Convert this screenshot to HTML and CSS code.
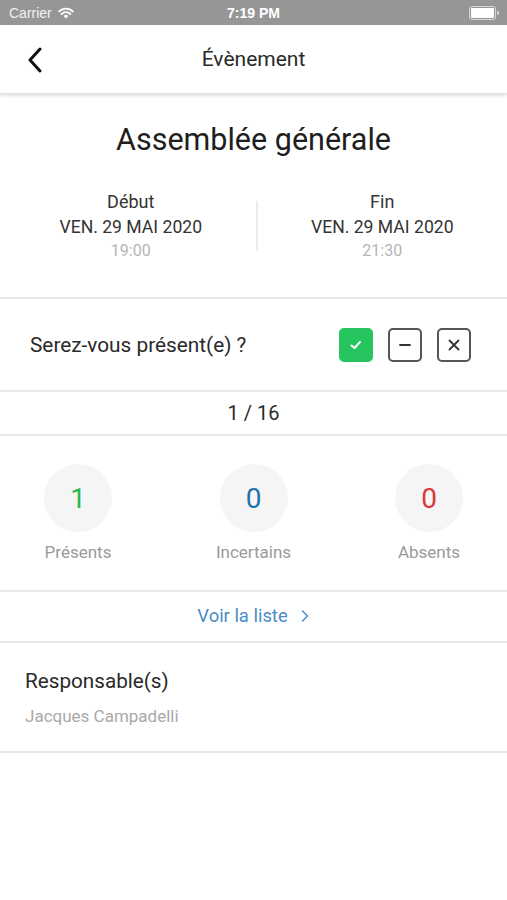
FILE: index.html
```html
<!DOCTYPE html>
<html lang="fr">
<head>
  <meta charset="UTF-8" />
  <meta name="viewport" content="width=device-width, initial-scale=1.0" />
  <title>Évènement</title>
  <link rel="stylesheet" href="styles.css">
</head>
<body>
  <div class="status-bar">
    <div class="status-left">
      <span>Carrier</span>
      <svg class="wifi" width="16" height="12" viewBox="0 0 16 12">
        <path d="M8 11.5 L5.6 9 A3.4 3.4 0 0 1 10.4 9 Z" fill="#fff"/>
        <path d="M3.6 7 A6.2 6.2 0 0 1 12.4 7" stroke="#fff" stroke-width="1.9" fill="none" stroke-linecap="round"/>
        <path d="M1.2 4.4 A9.6 9.6 0 0 1 14.8 4.4" stroke="#fff" stroke-width="1.9" fill="none" stroke-linecap="round"/>
      </svg>
    </div>
    <div class="status-time">7:19 PM</div>
    <div class="status-right">
      <div class="battery"><div class="battery-fill"></div></div>
      <div class="battery-tip"></div>
    </div>
  </div>

  <header class="nav">
    <svg class="back" width="16" height="26" viewBox="0 0 16 26">
      <path d="M13 2 L3 13 L13 24" stroke="#111" stroke-width="3" fill="none" stroke-linecap="round" stroke-linejoin="round"/>
    </svg>
    <div class="nav-title">Évènement</div>
  </header>

  <section class="event">
    <h1>Assemblée générale</h1>
    <div class="dates">
      <div class="date-col">
        <div class="date-label">Début</div>
        <div class="date-day">VEN. 29 MAI 2020</div>
        <div class="date-time">19:00</div>
      </div>
      <div class="date-sep"></div>
      <div class="date-col">
        <div class="date-label">Fin</div>
        <div class="date-day">VEN. 29 MAI 2020</div>
        <div class="date-time">21:30</div>
      </div>
    </div>
  </section>

  <section class="presence">
    <div class="presence-question">Serez-vous présent(e) ?</div>
    <div class="presence-buttons">
      <div class="pbtn pbtn-yes">
        <svg width="14" height="12" viewBox="0 0 14 12"><path d="M2.5 6.5 L5.5 9 L11 3" stroke="#fff" stroke-width="2" fill="none" stroke-linecap="round" stroke-linejoin="round"/></svg>
      </div>
      <div class="pbtn">
        <svg width="16" height="16" viewBox="0 0 16 16"><path d="M3 8 H13" stroke="#333" stroke-width="1.8" stroke-linecap="round"/></svg>
      </div>
      <div class="pbtn">
        <svg width="16" height="16" viewBox="0 0 16 16"><path d="M3.5 3.5 L12.5 12.5 M12.5 3.5 L3.5 12.5" stroke="#333" stroke-width="1.8" stroke-linecap="round"/></svg>
      </div>
    </div>
  </section>

  <div class="count">1 / 16</div>

  <section class="stats">
    <div class="stat">
      <div class="stat-circle green">1</div>
      <div class="stat-label">Présents</div>
    </div>
    <div class="stat">
      <div class="stat-circle blue">0</div>
      <div class="stat-label">Incertains</div>
    </div>
    <div class="stat">
      <div class="stat-circle red">0</div>
      <div class="stat-label">Absents</div>
    </div>
  </section>

  <div class="see-list">
    <span>Voir la liste</span>
    <svg width="10" height="14" viewBox="0 0 10 14"><path d="M2.5 2 L7.5 7 L2.5 12" stroke="#4a8cc4" stroke-width="1.5" fill="none" stroke-linecap="round" stroke-linejoin="round"/></svg>
  </div>

  <section class="managers">
    <div class="managers-title">Responsable(s)</div>
    <div class="managers-name">Jacques Campadelli</div>
  </section>
</body>
</html>
```

FILE: styles.css
```css
body {
  margin: 0;
  font-family: Roboto, "Noto Sans", sans-serif;
  background: #fff;
  color: #222;
  width: 507px;
}
.status-bar {
  height: 25px;
  background: #969696;
  color: #fff;
  display: flex;
  align-items: center;
  justify-content: space-between;
  padding: 0 8px 0 9px;
  font-family: "Liberation Sans", sans-serif;
  font-size: 14px;
  position: relative;
}
.status-left {
  display: flex;
  align-items: center;
  gap: 6px;
  color: #f2f2f2;
}
.status-time {
  position: absolute;
  left: 0;
  right: 0;
  text-align: center;
  font-weight: bold;
  font-size: 14px;
}
.status-right {
  display: flex;
  align-items: center;
}
.battery {
  width: 23px;
  height: 10px;
  border: 1px solid #d8d8d8;
  border-radius: 3px;
  padding: 1px;
}
.battery-fill {
  width: 100%;
  height: 100%;
  background: #fff;
  border-radius: 1px;
}
.battery-tip {
  width: 2px;
  height: 4px;
  background: #d0d0d0;
  margin-left: 1px;
  border-radius: 0 1px 1px 0;
}
.nav {
  height: 69px;
  display: flex;
  align-items: center;
  justify-content: center;
  position: relative;
  box-shadow: 0 2px 3px rgba(0, 0, 0, 0.12);
  border-bottom: 1px solid #e2e2e2;
  box-sizing: border-box;
}
.back {
  position: absolute;
  left: 27px;
  top: 22px;
}
.nav-title {
  font-size: 21px;
  color: #2a2a2a;
}
.event {
  padding-top: 28px;
  height: 175px;
  border-bottom: 2px solid #e8e8e8;
  box-sizing: content-box;
}
.event h1 {
  margin: 0;
  text-align: center;
  font-weight: normal;
  font-size: 30.5px;
  line-height: 36px;
  color: #1e1e1e;
}
.dates {
  display: flex;
  align-items: center;
  margin-top: 32px;
  padding-left: 6px;
}
.date-col {
  flex: 1;
  text-align: center;
}
.date-sep {
  width: 2px;
  height: 50px;
  background: #ececec;
}
.date-label {
  font-size: 18px;
  line-height: 24px;
  color: #333;
}
.date-day {
  font-size: 17.6px;
  line-height: 26px;
  color: #333;
}
.date-time {
  font-size: 16px;
  line-height: 21px;
  color: #b5b5b5;
}
.presence {
  height: 91px;
  display: flex;
  align-items: center;
  justify-content: space-between;
  padding: 0 36px 0 30px;
  border-bottom: 2px solid #e8e8e8;
}
.presence-question {
  font-size: 20.8px;
  color: #2a2a2a;
}
.presence-buttons {
  display: flex;
  gap: 15px;
}
.pbtn {
  width: 34px;
  height: 34px;
  box-sizing: border-box;
  border: 2px solid #555;
  border-radius: 5px;
  display: flex;
  align-items: center;
  justify-content: center;
}
.pbtn-yes {
  background: #26c45e;
  border-color: #26c45e;
}
.count {
  height: 42px;
  display: flex;
  align-items: center;
  justify-content: center;
  font-size: 20px;
  color: #2a2a2a;
  border-bottom: 2px solid #e8e8e8;
}
.stats {
  display: flex;
  justify-content: space-between;
  padding: 28px 44px 0;
  height: 126px;
  box-sizing: content-box;
  border-bottom: 2px solid #e8e8e8;
}
.stat {
  width: 68px;
  display: flex;
  flex-direction: column;
  align-items: center;
}
.stat-circle {
  width: 68px;
  height: 68px;
  flex-shrink: 0;
  border-radius: 50%;
  background: #f5f5f5;
  display: flex;
  align-items: center;
  justify-content: center;
  font-size: 28px;
}
.green { color: #2db553; }
.blue { color: #1f73ad; }
.red { color: #d93a3a; }
.stat-label {
  margin-top: 10px;
  font-size: 17px;
  white-space: nowrap;
  color: #9a9a9a;
}
.see-list {
  height: 51px;
  display: flex;
  align-items: center;
  justify-content: center;
  gap: 12px;
  font-size: 18.4px;
  color: #4a8cc4;
  border-bottom: 2px solid #e8e8e8;
  padding-bottom: 2px;
  box-sizing: border-box;
}
.managers {
  height: 108px;
  padding: 0 25px;
  border-bottom: 2px solid #e8e8e8;
}
.managers-title {
  padding-top: 25px;
  font-size: 20.7px;
  line-height: 26px;
  color: #2a2a2a;
}
.managers-name {
  margin-top: 11px;
  font-size: 17px;
  line-height: 22px;
  color: #a9a9a9;
}
```
